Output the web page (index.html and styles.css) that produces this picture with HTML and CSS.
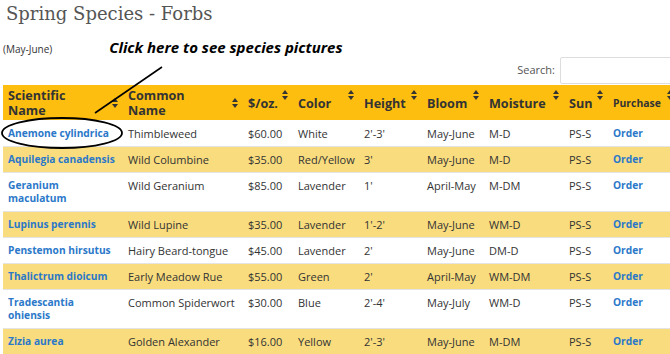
FILE: index.html
```html
<!DOCTYPE html>
<html>
<head>
<meta charset="utf-8">
<title>Spring Species - Forbs</title>
<link rel="stylesheet" href="styles.css">
</head>
<body>
<div class="page">
  <h1 class="title">Spring Species - Forbs</h1>
  <div class="intro">
    <span class="season">(May-June)</span>
    <span class="callout">Click here to see species pictures</span>
  </div>
  <div class="search-row">
    <label class="search-label">Search:</label>
    <input class="search-input" type="text">
  </div>
  <table class="species">
    <colgroup>
      <col class="c1"><col class="c2"><col class="c3"><col class="c4"><col class="c5"><col class="c6"><col class="c7"><col class="c8"><col class="c9">
    </colgroup>
    <thead>
      <tr>
        <th>Scientific<br>Name<span class="sort mid"><svg width="6" height="10" viewBox="0 0 6 10"><polygon points="0,4 3,0 6,4"/><polygon points="0,6 3,10 6,6"/></svg></span></th>
        <th>Common<br>Name<span class="sort mid"><svg width="6" height="10" viewBox="0 0 6 10"><polygon points="0,4 3,0 6,4"/><polygon points="0,6 3,10 6,6"/></svg></span></th>
        <th>$/oz.<span class="sort"><svg width="6" height="10" viewBox="0 0 6 10"><polygon points="0,4 3,0 6,4"/><polygon points="0,6 3,10 6,6"/></svg></span></th>
        <th>Color<span class="sort"><svg width="6" height="10" viewBox="0 0 6 10"><polygon points="0,4 3,0 6,4"/><polygon points="0,6 3,10 6,6"/></svg></span></th>
        <th>Height<span class="sort"><svg width="6" height="10" viewBox="0 0 6 10"><polygon points="0,4 3,0 6,4"/><polygon points="0,6 3,10 6,6"/></svg></span></th>
        <th>Bloom<span class="sort"><svg width="6" height="10" viewBox="0 0 6 10"><polygon points="0,4 3,0 6,4"/><polygon points="0,6 3,10 6,6"/></svg></span></th>
        <th>Moisture<span class="sort"><svg width="6" height="10" viewBox="0 0 6 10"><polygon points="0,4 3,0 6,4"/><polygon points="0,6 3,10 6,6"/></svg></span></th>
        <th>Sun<span class="sort"><svg width="6" height="10" viewBox="0 0 6 10"><polygon points="0,4 3,0 6,4"/><polygon points="0,6 3,10 6,6"/></svg></span></th>
        <th class="small">Purchase<span class="sort"><svg width="6" height="10" viewBox="0 0 6 10"><polygon points="0,4 3,0 6,4"/><polygon points="0,6 3,10 6,6"/></svg></span></th>
      </tr>
    </thead>
    <tbody>
      <tr><td><a href="#">Anemone cylindrica</a></td><td>Thimbleweed</td><td>$60.00</td><td>White</td><td>2'-3'</td><td>May-June</td><td>M-D</td><td>PS-S</td><td><a href="#">Order</a></td></tr>
      <tr><td><a href="#">Aquilegia canadensis</a></td><td>Wild Columbine</td><td>$35.00</td><td>Red/Yellow</td><td>3'</td><td>May-June</td><td>M-D</td><td>PS-S</td><td><a href="#">Order</a></td></tr>
      <tr><td><a href="#">Geranium maculatum</a></td><td>Wild Geranium</td><td>$85.00</td><td>Lavender</td><td>1'</td><td>April-May</td><td>M-DM</td><td>PS-S</td><td><a href="#">Order</a></td></tr>
      <tr><td><a href="#">Lupinus perennis</a></td><td>Wild Lupine</td><td>$35.00</td><td>Lavender</td><td>1'-2'</td><td>May-June</td><td>WM-D</td><td>PS-S</td><td><a href="#">Order</a></td></tr>
      <tr><td><a href="#">Penstemon hirsutus</a></td><td>Hairy Beard-tongue</td><td>$45.00</td><td>Lavender</td><td>2'</td><td>May-June</td><td>DM-D</td><td>PS-S</td><td><a href="#">Order</a></td></tr>
      <tr><td><a href="#">Thalictrum dioicum</a></td><td>Early Meadow Rue</td><td>$55.00</td><td>Green</td><td>2'</td><td>April-May</td><td>WM-DM</td><td>PS-S</td><td><a href="#">Order</a></td></tr>
      <tr><td><a href="#">Tradescantia ohiensis</a></td><td>Common Spiderwort</td><td>$30.00</td><td>Blue</td><td>2'-4'</td><td>May-July</td><td>WM-D</td><td>PS-S</td><td><a href="#">Order</a></td></tr>
      <tr><td><a href="#">Zizia aurea</a></td><td>Golden Alexander</td><td>$16.00</td><td>Yellow</td><td>2'-3'</td><td>May-June</td><td>M-DM</td><td>PS-S</td><td><a href="#">Order</a></td></tr>
    </tbody>
  </table>
  <svg class="annotation" width="670" height="354" viewBox="0 0 670 354">
    <line x1="162" y1="67" x2="95" y2="113" stroke="#000" stroke-width="1.6"/>
    <ellipse cx="62" cy="133" rx="60" ry="15" fill="none" stroke="#000" stroke-width="1.8"/>
  </svg>
</div>
</body>
</html>
```

FILE: styles.css
```css
html, body {
  margin: 0;
  padding: 0;
  overflow: hidden;
  background: #fff;
}

.page {
  position: relative;
  width: 670px;
  height: 354px;
  overflow: hidden;
  padding-left: 3px;
  box-sizing: border-box;
  font-family: "Open Sans", "Noto Sans", sans-serif;
  color: #333;
}

.title {
  margin: 0;
  padding: 2px 0 0 3px;
  height: 27px;
  box-sizing: border-box;
  font-family: "DejaVu Serif", serif;
  font-weight: normal;
  font-size: 18px;
  line-height: 24px;
  color: #555;
}

.intro {
  display: flex;
  align-items: baseline;
  height: 29px;
  padding-top: 10px;
  box-sizing: border-box;
}

.season {
  font-size: 10px;
  color: #333;
}

.callout {
  margin-left: 57px;
  font-size: 15px;
  font-weight: bold;
  font-style: italic;
  color: #000;
}

.search-row {
  display: flex;
  justify-content: flex-end;
  align-items: center;
  gap: 5px;
  height: 29px;
  margin-right: -40px;
}

.search-label {
  font-size: 11px;
  color: #555;
  margin-bottom: 2px;
}

.search-input {
  width: 150px;
  height: 27px;
  box-sizing: border-box;
  border: 1px solid #ddd;
  border-radius: 2px;
  margin: 0 0 1px;
}

.species {
  border-collapse: collapse;
  table-layout: fixed;
  width: 675px;
}

.c1 { width: 120px; }
.c2 { width: 120px; }
.c3 { width: 50px; }
.c4 { width: 66px; }
.c5 { width: 63px; }
.c6 { width: 62px; }
.c7 { width: 80px; }
.c8 { width: 44px; }
.c9 { width: 70px; }

.species th {
  position: relative;
  background: #fdbe10;
  text-align: left;
  font-size: 12.6px;
  font-weight: bold;
  line-height: 15px;
  padding: 3px 5px 2px;
  height: 30px;
  color: #333;
}

.species th.small {
  font-size: 10.4px;
}

.sort {
  position: absolute;
  right: 5px;
  top: 5px;
  display: block;
  line-height: 0;
}

.sort.mid {
  top: 13px;
}

.sort svg {
  fill: #333;
}

.species td {
  font-size: 11px;
  line-height: 13px;
  padding: 6px 5px 6px;
  border-top: 1px solid #e4e4e4;
  vertical-align: top;
  color: #333;
}

.species tbody tr:nth-child(even) td {
  background: #f8dc7e;
}

.species tbody tr:first-child td {
  border-top: none;
  padding-top: 7px;
}

.species a {
  display: block;
  color: #2b78c9;
  font-weight: bold;
  font-size: 10.2px;
  line-height: 13px;
  text-decoration: none;
}

.annotation {
  position: absolute;
  left: 0;
  top: 0;
  pointer-events: none;
}
```
